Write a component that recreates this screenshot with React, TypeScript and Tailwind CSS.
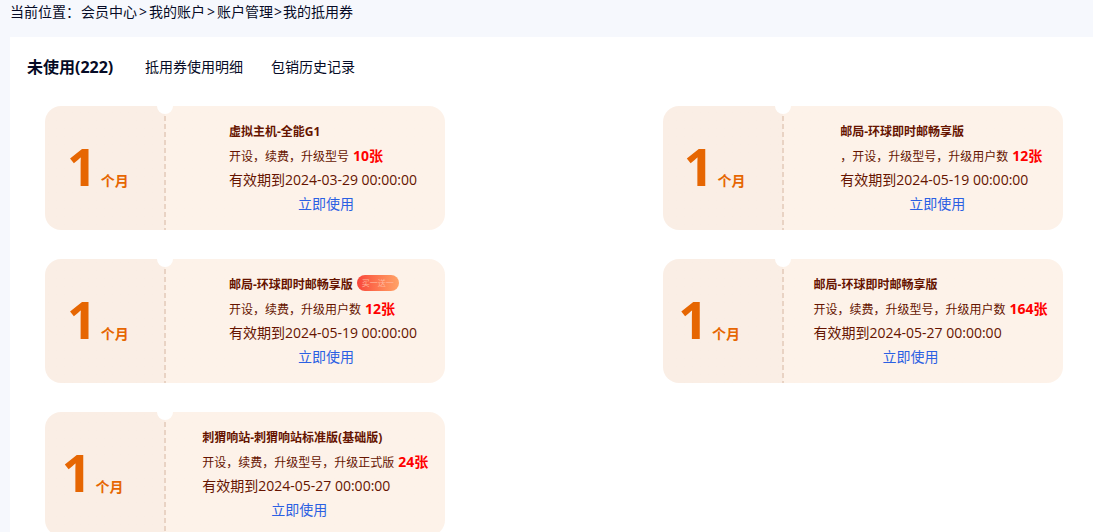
import React, { useState } from 'react';

interface Coupon {
  id: number;
  months: number;
  title: string;
  scope: string;
  count: number;
  expires: string;
  tag?: string;
}

const COUPONS: Coupon[] = [
  { id: 1, months: 1, title: '虚拟主机-全能G1', scope: '开设，续费，升级型号', count: 10, expires: '2024-03-29 00:00:00' },
  { id: 2, months: 1, title: '邮局-环球即时邮畅享版', scope: '，开设，升级型号，升级用户数', count: 12, expires: '2024-05-19 00:00:00' },
  { id: 3, months: 1, title: '邮局-环球即时邮畅享版', scope: '开设，续费，升级用户数', count: 12, expires: '2024-05-19 00:00:00', tag: '买一送一' },
  { id: 4, months: 1, title: '邮局-环球即时邮畅享版', scope: '开设，续费，升级型号，升级用户数', count: 164, expires: '2024-05-27 00:00:00' },
  { id: 5, months: 1, title: '刺猬响站-刺猬响站标准版(基础版)', scope: '开设，续费，升级型号，升级正式版', count: 24, expires: '2024-05-27 00:00:00' },
];

const TABS = [
  { id: 'unused', label: '未使用(222)' },
  { id: 'details', label: '抵用券使用明细' },
  { id: 'history', label: '包销历史记录' },
];

function CouponCard({ coupon }: { coupon: Coupon }) {
  return (
    <article className="relative flex items-center justify-around h-[124px] rounded-2xl overflow-hidden whitespace-nowrap bg-linear-to-r from-[#faeee5] from-[120px] to-[#fdf2e9] to-[120px]">
      {/* Notch and perforation */}
      <div className="absolute left-[112px] -top-2 w-4 h-4 rounded-full bg-white"></div>
      <div className="absolute left-[119px] top-[10px] bottom-0 w-0.5 bg-[repeating-linear-gradient(to_bottom,#e9d3c4_0px,#e9d3c4_5px,transparent_5px,transparent_8px)]"></div>

      <div className="flex items-baseline gap-1 pb-1 text-[#e66602] font-bold">
        <span className="text-[52px] leading-[60px]">{coupon.months}</span>
        <span className="text-sm">个月</span>
      </div>

      <span className="w-3"></span>

      <div className="min-w-[194px] text-[#661400]">
        <h3 className="flex items-center gap-1 h-6 text-xs leading-6 font-bold">
          {coupon.title}
          {coupon.tag && (
            <span className="flex items-center justify-center w-[42px] h-4 -mt-1 rounded-lg bg-linear-to-r from-[#f8433a] to-[#ffa267] text-[8px] font-normal text-[#ffb59b]">
              {coupon.tag}
            </span>
          )}
        </h3>
        <p className="flex items-baseline gap-1 h-6 text-xs leading-6">
          {coupon.scope}
          <strong className="text-sm leading-6 text-[#ff0000]">{coupon.count}张</strong>
        </p>
        <p className="h-6 text-sm leading-6">有效期到{coupon.expires}</p>
        <p className="w-[194px] h-6 text-center text-sm leading-6">
          <a href="#use" className="text-[#2b60e3]">立即使用</a>
        </p>
      </div>
    </article>
  );
}

export default function App() {
  const [activeTab, setActiveTab] = useState('unused');

  return (
    <div className="min-h-screen bg-[#f6f8fd] text-[#060b26] text-sm font-['Open_Sans','Noto_Sans_CJK_SC',sans-serif]">
      {/* Breadcrumb */}
      <nav className="flex items-center h-[37px] pl-[10px] pb-[14px]">
        <span className="w-[71px]">当前位置：</span>
        <a href="#member">会员中心</a>
        <span className="px-0.5">&gt;</span>
        <a href="#account">我的账户</a>
        <span className="px-0.5">&gt;</span>
        <a href="#manage">账户管理</a>
        <span className="px-px">&gt;</span>
        <a href="#coupons">我的抵用券</a>
      </nav>

      <main className="ml-[10px] bg-white pt-[15px] pb-8">
        {/* Tabs */}
        <div className="flex items-center gap-7 h-[30px] pl-[17px]">
          {TABS.map((tab) => (
            <button
              key={tab.id}
              onClick={() => setActiveTab(tab.id)}
              className={activeTab === tab.id ? 'min-w-[90px] text-left text-base font-bold' : 'text-sm'}
            >
              {tab.label}
            </button>
          ))}
        </div>

        <div className="grid grid-cols-[400px_400px] justify-between gap-y-[29px] pt-6 pl-[35px] pr-[30px]">
          {COUPONS.map((coupon) => (
            <CouponCard key={coupon.id} coupon={coupon} />
          ))}
        </div>
      </main>
    </div>
  );
}
